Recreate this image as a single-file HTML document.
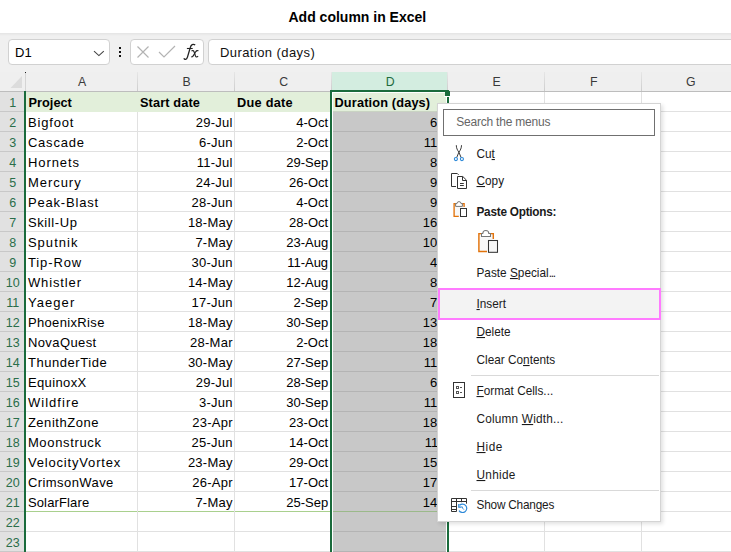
<!DOCTYPE html>
<html><head><meta charset="utf-8"><style>
html,body{margin:0;padding:0;}
body{width:731px;height:552px;overflow:hidden;position:relative;background:#fff;font-family:"Liberation Sans",sans-serif;}
body>div,body>svg{position:absolute;}
.t{white-space:nowrap;}
u{text-decoration-thickness:1px;text-underline-offset:1.3px;}
</style></head><body>
<div class="t" style="left:288.5px;top:9.85px;font-size:14px;line-height:14px;font-weight:bold;color:#000">Add column in Excel</div>
<div style="left:0px;top:33px;width:731px;height:39px;background:#f0f0f0"></div>
<div style="left:0px;top:33px;width:731px;height:3px;background:linear-gradient(#e4e4e4,#f0f0f0)"></div>
<div style="left:8px;top:39px;width:102px;height:26px;background:#fff;border:1px solid #d1d1d1;border-radius:4px;box-sizing:border-box"></div>
<div class="t" style="left:15px;top:45.7px;font-size:13px;line-height:13px;color:#000">D1</div>
<svg style="left:93px;top:49px" width="13" height="9" viewBox="0 0 13 9"><path d="M1 2.2 L5.9 6.6 L10.8 2.2" fill="none" stroke="#444" stroke-width="1.1"/></svg>
<div style="left:119px;top:47px;width:2px;height:2px;background:#111"></div>
<div style="left:119px;top:51px;width:2px;height:2px;background:#111"></div>
<div style="left:119px;top:55px;width:2px;height:2px;background:#111"></div>
<div style="left:130px;top:39px;width:74px;height:26px;background:#fff;border:1px solid #d1d1d1;border-radius:4px;box-sizing:border-box"></div>
<svg style="left:136px;top:45px" width="14" height="14" viewBox="0 0 14 14"><path d="M1.5 1.5 L12.5 12.5 M12.5 1.5 L1.5 12.5" stroke="#b3b3b3" stroke-width="1.2"/></svg>
<svg style="left:158px;top:45px" width="18" height="14" viewBox="0 0 18 14"><path d="M1 7 L6 12 L17 1" fill="none" stroke="#b3b3b3" stroke-width="1.2"/></svg>
<svg style="left:176px;top:38px" width="30" height="28" viewBox="0 0 30 28">
<path d="M7.9 20.2 C8.4 21.9 10.6 22.1 11.5 19 L14.3 9.5 C15 6.6 17 5.6 19.2 6.9" fill="none" stroke="#222" stroke-width="1.25"/>
<path d="M10.9 10.5 H16.7" stroke="#222" stroke-width="1.1"/>
<path d="M15.5 13.2 C16.5 12.1 17.6 12.4 18.1 13.9 L19.5 18 C20 19.3 21.1 19.3 22.1 18.2" fill="none" stroke="#222" stroke-width="1.15"/>
<path d="M22.4 13 C21.6 12.1 20.5 12.5 19.5 14 L17.4 17.6 C16.8 18.9 15.9 19.2 15.2 18.6" fill="none" stroke="#222" stroke-width="1.15"/>
</svg>
<div style="left:208px;top:39px;width:540px;height:26px;background:#fff;border:1px solid #d1d1d1;border-radius:4px;box-sizing:border-box"></div>
<div class="t" style="left:220px;top:45.7px;font-size:13px;line-height:13px;color:#111;letter-spacing:0.42px">Duration (days)</div>
<div style="left:0px;top:72px;width:731px;height:19px;background:#efefef"></div>
<div style="left:0px;top:91px;width:731px;height:1px;background:#bdbdbd"></div>
<svg style="left:0px;top:72px" width="24" height="19" viewBox="0 0 24 19"><path d="M22 4 L22 16 L10.5 16 Z" fill="#dcdcdc"/></svg>
<div style="left:25px;top:72px;width:1px;height:1px;background:#222"></div>
<div style="left:25px;top:73px;width:1px;height:18px;background:#d4d4d4"></div>
<div style="left:332px;top:72px;width:115px;height:18px;background:#d3ede0"></div>
<div class="t" style="left:26.2px;width:112px;top:76.19px;font-size:12.3px;line-height:12.3px;text-align:center;color:#3a3a3a">A</div>
<div style="left:137px;top:72px;width:1px;height:19px;background:linear-gradient(#e6e6e6,#cdcdcd)"></div>
<div class="t" style="left:138.2px;width:97px;top:76.19px;font-size:12.3px;line-height:12.3px;text-align:center;color:#3a3a3a">B</div>
<div style="left:234px;top:72px;width:1px;height:19px;background:linear-gradient(#e6e6e6,#cdcdcd)"></div>
<div class="t" style="left:235.2px;width:97px;top:76.19px;font-size:12.3px;line-height:12.3px;text-align:center;color:#3a3a3a">C</div>
<div style="left:331px;top:72px;width:1px;height:19px;background:linear-gradient(#e6e6e6,#cdcdcd)"></div>
<div class="t" style="left:332.2px;width:116px;top:76.19px;font-size:12.3px;line-height:12.3px;text-align:center;color:#1d6b3e">D</div>
<div style="left:447px;top:72px;width:1px;height:19px;background:linear-gradient(#e6e6e6,#cdcdcd)"></div>
<div class="t" style="left:448.2px;width:97px;top:76.19px;font-size:12.3px;line-height:12.3px;text-align:center;color:#3a3a3a">E</div>
<div style="left:544px;top:72px;width:1px;height:19px;background:linear-gradient(#e6e6e6,#cdcdcd)"></div>
<div class="t" style="left:545.2px;width:97px;top:76.19px;font-size:12.3px;line-height:12.3px;text-align:center;color:#3a3a3a">F</div>
<div style="left:641px;top:72px;width:1px;height:19px;background:linear-gradient(#e6e6e6,#cdcdcd)"></div>
<div class="t" style="left:642.2px;width:97px;top:76.19px;font-size:12.3px;line-height:12.3px;text-align:center;color:#3a3a3a">G</div>
<div style="left:330px;top:90px;width:119px;height:2px;background:#1a6b3c"></div>
<div style="left:0px;top:92px;width:24px;height:19px;background:#e1e1e1"></div>
<div style="left:0px;top:111px;width:24px;height:1px;background:#c8c8c8"></div>
<div class="t" style="left:0.3px;width:25px;text-align:center;top:97.22px;font-size:12.5px;line-height:12.5px;color:#2a6e4a">1</div>
<div style="left:0px;top:112px;width:24px;height:19px;background:#e1e1e1"></div>
<div style="left:0px;top:131px;width:24px;height:1px;background:#c8c8c8"></div>
<div class="t" style="left:0.3px;width:25px;text-align:center;top:117.22px;font-size:12.5px;line-height:12.5px;color:#2a6e4a">2</div>
<div style="left:0px;top:132px;width:24px;height:19px;background:#e1e1e1"></div>
<div style="left:0px;top:151px;width:24px;height:1px;background:#c8c8c8"></div>
<div class="t" style="left:0.3px;width:25px;text-align:center;top:137.22px;font-size:12.5px;line-height:12.5px;color:#2a6e4a">3</div>
<div style="left:0px;top:152px;width:24px;height:19px;background:#e1e1e1"></div>
<div style="left:0px;top:171px;width:24px;height:1px;background:#c8c8c8"></div>
<div class="t" style="left:0.3px;width:25px;text-align:center;top:157.22px;font-size:12.5px;line-height:12.5px;color:#2a6e4a">4</div>
<div style="left:0px;top:172px;width:24px;height:19px;background:#e1e1e1"></div>
<div style="left:0px;top:191px;width:24px;height:1px;background:#c8c8c8"></div>
<div class="t" style="left:0.3px;width:25px;text-align:center;top:177.22px;font-size:12.5px;line-height:12.5px;color:#2a6e4a">5</div>
<div style="left:0px;top:192px;width:24px;height:19px;background:#e1e1e1"></div>
<div style="left:0px;top:211px;width:24px;height:1px;background:#c8c8c8"></div>
<div class="t" style="left:0.3px;width:25px;text-align:center;top:197.22px;font-size:12.5px;line-height:12.5px;color:#2a6e4a">6</div>
<div style="left:0px;top:212px;width:24px;height:19px;background:#e1e1e1"></div>
<div style="left:0px;top:231px;width:24px;height:1px;background:#c8c8c8"></div>
<div class="t" style="left:0.3px;width:25px;text-align:center;top:217.22px;font-size:12.5px;line-height:12.5px;color:#2a6e4a">7</div>
<div style="left:0px;top:232px;width:24px;height:19px;background:#e1e1e1"></div>
<div style="left:0px;top:251px;width:24px;height:1px;background:#c8c8c8"></div>
<div class="t" style="left:0.3px;width:25px;text-align:center;top:237.22px;font-size:12.5px;line-height:12.5px;color:#2a6e4a">8</div>
<div style="left:0px;top:252px;width:24px;height:19px;background:#e1e1e1"></div>
<div style="left:0px;top:271px;width:24px;height:1px;background:#c8c8c8"></div>
<div class="t" style="left:0.3px;width:25px;text-align:center;top:257.22px;font-size:12.5px;line-height:12.5px;color:#2a6e4a">9</div>
<div style="left:0px;top:272px;width:24px;height:19px;background:#e1e1e1"></div>
<div style="left:0px;top:291px;width:24px;height:1px;background:#c8c8c8"></div>
<div class="t" style="left:0.3px;width:25px;text-align:center;top:277.22px;font-size:12.5px;line-height:12.5px;color:#2a6e4a">10</div>
<div style="left:0px;top:292px;width:24px;height:19px;background:#e1e1e1"></div>
<div style="left:0px;top:311px;width:24px;height:1px;background:#c8c8c8"></div>
<div class="t" style="left:0.3px;width:25px;text-align:center;top:297.22px;font-size:12.5px;line-height:12.5px;color:#2a6e4a">11</div>
<div style="left:0px;top:312px;width:24px;height:19px;background:#e1e1e1"></div>
<div style="left:0px;top:331px;width:24px;height:1px;background:#c8c8c8"></div>
<div class="t" style="left:0.3px;width:25px;text-align:center;top:317.22px;font-size:12.5px;line-height:12.5px;color:#2a6e4a">12</div>
<div style="left:0px;top:332px;width:24px;height:19px;background:#e1e1e1"></div>
<div style="left:0px;top:351px;width:24px;height:1px;background:#c8c8c8"></div>
<div class="t" style="left:0.3px;width:25px;text-align:center;top:337.22px;font-size:12.5px;line-height:12.5px;color:#2a6e4a">13</div>
<div style="left:0px;top:352px;width:24px;height:19px;background:#e1e1e1"></div>
<div style="left:0px;top:371px;width:24px;height:1px;background:#c8c8c8"></div>
<div class="t" style="left:0.3px;width:25px;text-align:center;top:357.22px;font-size:12.5px;line-height:12.5px;color:#2a6e4a">14</div>
<div style="left:0px;top:372px;width:24px;height:19px;background:#e1e1e1"></div>
<div style="left:0px;top:391px;width:24px;height:1px;background:#c8c8c8"></div>
<div class="t" style="left:0.3px;width:25px;text-align:center;top:377.22px;font-size:12.5px;line-height:12.5px;color:#2a6e4a">15</div>
<div style="left:0px;top:392px;width:24px;height:19px;background:#e1e1e1"></div>
<div style="left:0px;top:411px;width:24px;height:1px;background:#c8c8c8"></div>
<div class="t" style="left:0.3px;width:25px;text-align:center;top:397.22px;font-size:12.5px;line-height:12.5px;color:#2a6e4a">16</div>
<div style="left:0px;top:412px;width:24px;height:19px;background:#e1e1e1"></div>
<div style="left:0px;top:431px;width:24px;height:1px;background:#c8c8c8"></div>
<div class="t" style="left:0.3px;width:25px;text-align:center;top:417.22px;font-size:12.5px;line-height:12.5px;color:#2a6e4a">17</div>
<div style="left:0px;top:432px;width:24px;height:19px;background:#e1e1e1"></div>
<div style="left:0px;top:451px;width:24px;height:1px;background:#c8c8c8"></div>
<div class="t" style="left:0.3px;width:25px;text-align:center;top:437.22px;font-size:12.5px;line-height:12.5px;color:#2a6e4a">18</div>
<div style="left:0px;top:452px;width:24px;height:19px;background:#e1e1e1"></div>
<div style="left:0px;top:471px;width:24px;height:1px;background:#c8c8c8"></div>
<div class="t" style="left:0.3px;width:25px;text-align:center;top:457.22px;font-size:12.5px;line-height:12.5px;color:#2a6e4a">19</div>
<div style="left:0px;top:472px;width:24px;height:19px;background:#e1e1e1"></div>
<div style="left:0px;top:491px;width:24px;height:1px;background:#c8c8c8"></div>
<div class="t" style="left:0.3px;width:25px;text-align:center;top:477.22px;font-size:12.5px;line-height:12.5px;color:#2a6e4a">20</div>
<div style="left:0px;top:492px;width:24px;height:19px;background:#e1e1e1"></div>
<div style="left:0px;top:511px;width:24px;height:1px;background:#c8c8c8"></div>
<div class="t" style="left:0.3px;width:25px;text-align:center;top:497.22px;font-size:12.5px;line-height:12.5px;color:#2a6e4a">21</div>
<div style="left:0px;top:512px;width:24px;height:19px;background:#e1e1e1"></div>
<div style="left:0px;top:531px;width:24px;height:1px;background:#c8c8c8"></div>
<div class="t" style="left:0.3px;width:25px;text-align:center;top:517.22px;font-size:12.5px;line-height:12.5px;color:#2a6e4a">22</div>
<div style="left:0px;top:532px;width:24px;height:19px;background:#e1e1e1"></div>
<div style="left:0px;top:551px;width:24px;height:1px;background:#c8c8c8"></div>
<div class="t" style="left:0.3px;width:25px;text-align:center;top:537.22px;font-size:12.5px;line-height:12.5px;color:#2a6e4a">23</div>
<div style="left:26px;top:92px;width:305px;height:20px;background:#e2efda"></div>
<div style="left:332px;top:92px;width:115px;height:460px;background:#fff"></div>
<div style="left:333px;top:112px;width:113px;height:440px;background:#c8c8c8"></div>
<div style="left:333px;top:93px;width:113px;height:18px;background:#e2efda"></div>
<div style="left:333px;top:111px;width:113px;height:1px;background:#c9d3c3"></div>
<div style="left:26px;top:131px;width:305px;height:1px;background:#e1e1e1"></div>
<div style="left:333px;top:131px;width:113px;height:1px;background:#b4b4b4"></div>
<div style="left:449px;top:131px;width:282px;height:1px;background:#e1e1e1"></div>
<div style="left:26px;top:151px;width:305px;height:1px;background:#e1e1e1"></div>
<div style="left:333px;top:151px;width:113px;height:1px;background:#b4b4b4"></div>
<div style="left:449px;top:151px;width:282px;height:1px;background:#e1e1e1"></div>
<div style="left:26px;top:171px;width:305px;height:1px;background:#e1e1e1"></div>
<div style="left:333px;top:171px;width:113px;height:1px;background:#b4b4b4"></div>
<div style="left:449px;top:171px;width:282px;height:1px;background:#e1e1e1"></div>
<div style="left:26px;top:191px;width:305px;height:1px;background:#e1e1e1"></div>
<div style="left:333px;top:191px;width:113px;height:1px;background:#b4b4b4"></div>
<div style="left:449px;top:191px;width:282px;height:1px;background:#e1e1e1"></div>
<div style="left:26px;top:211px;width:305px;height:1px;background:#e1e1e1"></div>
<div style="left:333px;top:211px;width:113px;height:1px;background:#b4b4b4"></div>
<div style="left:449px;top:211px;width:282px;height:1px;background:#e1e1e1"></div>
<div style="left:26px;top:231px;width:305px;height:1px;background:#e1e1e1"></div>
<div style="left:333px;top:231px;width:113px;height:1px;background:#b4b4b4"></div>
<div style="left:449px;top:231px;width:282px;height:1px;background:#e1e1e1"></div>
<div style="left:26px;top:251px;width:305px;height:1px;background:#e1e1e1"></div>
<div style="left:333px;top:251px;width:113px;height:1px;background:#b4b4b4"></div>
<div style="left:449px;top:251px;width:282px;height:1px;background:#e1e1e1"></div>
<div style="left:26px;top:271px;width:305px;height:1px;background:#e1e1e1"></div>
<div style="left:333px;top:271px;width:113px;height:1px;background:#b4b4b4"></div>
<div style="left:449px;top:271px;width:282px;height:1px;background:#e1e1e1"></div>
<div style="left:26px;top:291px;width:305px;height:1px;background:#e1e1e1"></div>
<div style="left:333px;top:291px;width:113px;height:1px;background:#b4b4b4"></div>
<div style="left:449px;top:291px;width:282px;height:1px;background:#e1e1e1"></div>
<div style="left:26px;top:311px;width:305px;height:1px;background:#e1e1e1"></div>
<div style="left:333px;top:311px;width:113px;height:1px;background:#b4b4b4"></div>
<div style="left:449px;top:311px;width:282px;height:1px;background:#e1e1e1"></div>
<div style="left:26px;top:331px;width:305px;height:1px;background:#e1e1e1"></div>
<div style="left:333px;top:331px;width:113px;height:1px;background:#b4b4b4"></div>
<div style="left:449px;top:331px;width:282px;height:1px;background:#e1e1e1"></div>
<div style="left:26px;top:351px;width:305px;height:1px;background:#e1e1e1"></div>
<div style="left:333px;top:351px;width:113px;height:1px;background:#b4b4b4"></div>
<div style="left:449px;top:351px;width:282px;height:1px;background:#e1e1e1"></div>
<div style="left:26px;top:371px;width:305px;height:1px;background:#e1e1e1"></div>
<div style="left:333px;top:371px;width:113px;height:1px;background:#b4b4b4"></div>
<div style="left:449px;top:371px;width:282px;height:1px;background:#e1e1e1"></div>
<div style="left:26px;top:391px;width:305px;height:1px;background:#e1e1e1"></div>
<div style="left:333px;top:391px;width:113px;height:1px;background:#b4b4b4"></div>
<div style="left:449px;top:391px;width:282px;height:1px;background:#e1e1e1"></div>
<div style="left:26px;top:411px;width:305px;height:1px;background:#e1e1e1"></div>
<div style="left:333px;top:411px;width:113px;height:1px;background:#b4b4b4"></div>
<div style="left:449px;top:411px;width:282px;height:1px;background:#e1e1e1"></div>
<div style="left:26px;top:431px;width:305px;height:1px;background:#e1e1e1"></div>
<div style="left:333px;top:431px;width:113px;height:1px;background:#b4b4b4"></div>
<div style="left:449px;top:431px;width:282px;height:1px;background:#e1e1e1"></div>
<div style="left:26px;top:451px;width:305px;height:1px;background:#e1e1e1"></div>
<div style="left:333px;top:451px;width:113px;height:1px;background:#b4b4b4"></div>
<div style="left:449px;top:451px;width:282px;height:1px;background:#e1e1e1"></div>
<div style="left:26px;top:471px;width:305px;height:1px;background:#e1e1e1"></div>
<div style="left:333px;top:471px;width:113px;height:1px;background:#b4b4b4"></div>
<div style="left:449px;top:471px;width:282px;height:1px;background:#e1e1e1"></div>
<div style="left:26px;top:491px;width:305px;height:1px;background:#e1e1e1"></div>
<div style="left:333px;top:491px;width:113px;height:1px;background:#b4b4b4"></div>
<div style="left:449px;top:491px;width:282px;height:1px;background:#e1e1e1"></div>
<div style="left:26px;top:511px;width:305px;height:1px;background:#e1e1e1"></div>
<div style="left:333px;top:511px;width:113px;height:1px;background:#b4b4b4"></div>
<div style="left:449px;top:511px;width:282px;height:1px;background:#e1e1e1"></div>
<div style="left:26px;top:531px;width:305px;height:1px;background:#e1e1e1"></div>
<div style="left:333px;top:531px;width:113px;height:1px;background:#b4b4b4"></div>
<div style="left:449px;top:531px;width:282px;height:1px;background:#e1e1e1"></div>
<div style="left:26px;top:551px;width:305px;height:1px;background:#e1e1e1"></div>
<div style="left:333px;top:551px;width:113px;height:1px;background:#b4b4b4"></div>
<div style="left:449px;top:551px;width:282px;height:1px;background:#e1e1e1"></div>
<div style="left:449px;top:111px;width:282px;height:1px;background:#e1e1e1"></div>
<div style="left:26px;top:511px;width:305px;height:1px;background:#a9d08e"></div>
<div style="left:333px;top:511px;width:113px;height:1px;background:#9bb98a"></div>
<div style="left:137px;top:112px;width:1px;height:440px;background:#e1e1e1"></div>
<div style="left:234px;top:112px;width:1px;height:440px;background:#e1e1e1"></div>
<div style="left:641px;top:112px;width:1px;height:440px;background:#e1e1e1"></div>
<div style="left:544px;top:112px;width:1px;height:440px;background:#e1e1e1"></div>
<div style="left:641px;top:92px;width:1px;height:20px;background:#e1e1e1"></div>
<div style="left:544px;top:92px;width:1px;height:20px;background:#e1e1e1"></div>
<div style="left:24px;top:91px;width:2px;height:461px;background:#1a6b3c"></div>
<div style="left:330px;top:90px;width:2px;height:462px;background:#1a6b3c"></div>
<div style="left:447px;top:97px;width:2px;height:455px;background:#1a6b3c"></div>
<div style="left:446px;top:91px;width:1px;height:6px;background:#fff"></div>
<div style="left:444px;top:96px;width:6px;height:1px;background:#fff"></div>
<div style="left:445px;top:91px;width:5px;height:5px;background:#1a6b3c"></div>
<div class="t" style="left:28.6px;top:97.01px;font-size:12.75px;line-height:12.75px;font-weight:bold;color:#000">Project</div>
<div class="t" style="left:140px;top:97.01px;font-size:12.75px;line-height:12.75px;font-weight:bold;color:#000;letter-spacing:0.12px">Start date</div>
<div class="t" style="left:237px;top:97.01px;font-size:12.75px;line-height:12.75px;font-weight:bold;color:#000;letter-spacing:0.25px">Due date</div>
<div class="t" style="left:334.5px;top:97.01px;font-size:12.75px;line-height:12.75px;font-weight:bold;color:#000;letter-spacing:0.15px">Duration (days)</div>
<div class="t" style="left:27.9px;top:116.0px;font-size:13px;line-height:13px;color:#000;letter-spacing:0.85px">Bigfoot</div>
<div class="t" style="right:498.25px;top:116.0px;font-size:13px;line-height:13px;color:#000;letter-spacing:0.25px">29-Jul</div>
<div class="t" style="right:402.9px;top:116.0px;font-size:13px;line-height:13px;color:#000">4-Oct</div>
<div class="t" style="right:286.5px;top:116.0px;font-size:13px;line-height:13px;color:#000">67</div>
<div class="t" style="left:27.9px;top:136.0px;font-size:13px;line-height:13px;color:#000;letter-spacing:0.79px">Cascade</div>
<div class="t" style="right:498.25px;top:136.0px;font-size:13px;line-height:13px;color:#000;letter-spacing:0.25px">6-Jun</div>
<div class="t" style="right:402.9px;top:136.0px;font-size:13px;line-height:13px;color:#000">2-Oct</div>
<div class="t" style="right:286.5px;top:136.0px;font-size:13px;line-height:13px;color:#000">118</div>
<div class="t" style="left:27.9px;top:156.0px;font-size:13px;line-height:13px;color:#000;letter-spacing:0.94px">Hornets</div>
<div class="t" style="right:498.25px;top:156.0px;font-size:13px;line-height:13px;color:#000;letter-spacing:0.25px">11-Jul</div>
<div class="t" style="right:402.9px;top:156.0px;font-size:13px;line-height:13px;color:#000">29-Sep</div>
<div class="t" style="right:286.5px;top:156.0px;font-size:13px;line-height:13px;color:#000">80</div>
<div class="t" style="left:27.9px;top:176.0px;font-size:13px;line-height:13px;color:#000;letter-spacing:0.97px">Mercury</div>
<div class="t" style="right:498.25px;top:176.0px;font-size:13px;line-height:13px;color:#000;letter-spacing:0.25px">24-Jul</div>
<div class="t" style="right:402.9px;top:176.0px;font-size:13px;line-height:13px;color:#000">26-Oct</div>
<div class="t" style="right:286.5px;top:176.0px;font-size:13px;line-height:13px;color:#000">94</div>
<div class="t" style="left:27.9px;top:196.0px;font-size:13px;line-height:13px;color:#000;letter-spacing:0.82px">Peak-Blast</div>
<div class="t" style="right:498.25px;top:196.0px;font-size:13px;line-height:13px;color:#000;letter-spacing:0.25px">28-Jun</div>
<div class="t" style="right:402.9px;top:196.0px;font-size:13px;line-height:13px;color:#000">4-Oct</div>
<div class="t" style="right:286.5px;top:196.0px;font-size:13px;line-height:13px;color:#000">98</div>
<div class="t" style="left:27.9px;top:216.0px;font-size:13px;line-height:13px;color:#000;letter-spacing:0.61px">Skill-Up</div>
<div class="t" style="right:498.25px;top:216.0px;font-size:13px;line-height:13px;color:#000;letter-spacing:0.25px">18-May</div>
<div class="t" style="right:402.9px;top:216.0px;font-size:13px;line-height:13px;color:#000">28-Oct</div>
<div class="t" style="right:286.5px;top:216.0px;font-size:13px;line-height:13px;color:#000">163</div>
<div class="t" style="left:27.9px;top:236.0px;font-size:13px;line-height:13px;color:#000;letter-spacing:1.04px">Sputnik</div>
<div class="t" style="right:498.25px;top:236.0px;font-size:13px;line-height:13px;color:#000;letter-spacing:0.25px">7-May</div>
<div class="t" style="right:402.9px;top:236.0px;font-size:13px;line-height:13px;color:#000">23-Aug</div>
<div class="t" style="right:286.5px;top:236.0px;font-size:13px;line-height:13px;color:#000">108</div>
<div class="t" style="left:27.9px;top:256.0px;font-size:13px;line-height:13px;color:#000;letter-spacing:0.9px">Tip-Row</div>
<div class="t" style="right:498.25px;top:256.0px;font-size:13px;line-height:13px;color:#000;letter-spacing:0.25px">30-Jun</div>
<div class="t" style="right:402.9px;top:256.0px;font-size:13px;line-height:13px;color:#000">11-Aug</div>
<div class="t" style="right:286.5px;top:256.0px;font-size:13px;line-height:13px;color:#000">42</div>
<div class="t" style="left:27.9px;top:276.0px;font-size:13px;line-height:13px;color:#000;letter-spacing:0.88px">Whistler</div>
<div class="t" style="right:498.25px;top:276.0px;font-size:13px;line-height:13px;color:#000;letter-spacing:0.25px">14-May</div>
<div class="t" style="right:402.9px;top:276.0px;font-size:13px;line-height:13px;color:#000">12-Aug</div>
<div class="t" style="right:286.5px;top:276.0px;font-size:13px;line-height:13px;color:#000">89</div>
<div class="t" style="left:27.9px;top:296.0px;font-size:13px;line-height:13px;color:#000;letter-spacing:1.08px">Yaeger</div>
<div class="t" style="right:498.25px;top:296.0px;font-size:13px;line-height:13px;color:#000;letter-spacing:0.25px">17-Jun</div>
<div class="t" style="right:402.9px;top:296.0px;font-size:13px;line-height:13px;color:#000">2-Sep</div>
<div class="t" style="right:286.5px;top:296.0px;font-size:13px;line-height:13px;color:#000">77</div>
<div class="t" style="left:27.9px;top:316.0px;font-size:13px;line-height:13px;color:#000;letter-spacing:0.35px">PhoenixRise</div>
<div class="t" style="right:498.25px;top:316.0px;font-size:13px;line-height:13px;color:#000;letter-spacing:0.25px">18-May</div>
<div class="t" style="right:402.9px;top:316.0px;font-size:13px;line-height:13px;color:#000">30-Sep</div>
<div class="t" style="right:286.5px;top:316.0px;font-size:13px;line-height:13px;color:#000">135</div>
<div class="t" style="left:27.9px;top:336.0px;font-size:13px;line-height:13px;color:#000;letter-spacing:0.41px">NovaQuest</div>
<div class="t" style="right:498.25px;top:336.0px;font-size:13px;line-height:13px;color:#000;letter-spacing:0.25px">28-Mar</div>
<div class="t" style="right:402.9px;top:336.0px;font-size:13px;line-height:13px;color:#000">2-Oct</div>
<div class="t" style="right:286.5px;top:336.0px;font-size:13px;line-height:13px;color:#000">188</div>
<div class="t" style="left:27.9px;top:356.0px;font-size:13px;line-height:13px;color:#000;letter-spacing:0.56px">ThunderTide</div>
<div class="t" style="right:498.25px;top:356.0px;font-size:13px;line-height:13px;color:#000;letter-spacing:0.25px">30-May</div>
<div class="t" style="right:402.9px;top:356.0px;font-size:13px;line-height:13px;color:#000">27-Sep</div>
<div class="t" style="right:286.5px;top:356.0px;font-size:13px;line-height:13px;color:#000">119</div>
<div class="t" style="left:27.9px;top:376.0px;font-size:13px;line-height:13px;color:#000;letter-spacing:0.38px">EquinoxX</div>
<div class="t" style="right:498.25px;top:376.0px;font-size:13px;line-height:13px;color:#000;letter-spacing:0.25px">29-Jul</div>
<div class="t" style="right:402.9px;top:376.0px;font-size:13px;line-height:13px;color:#000">28-Sep</div>
<div class="t" style="right:286.5px;top:376.0px;font-size:13px;line-height:13px;color:#000">61</div>
<div class="t" style="left:27.9px;top:396.0px;font-size:13px;line-height:13px;color:#000;letter-spacing:1.05px">Wildfire</div>
<div class="t" style="right:498.25px;top:396.0px;font-size:13px;line-height:13px;color:#000;letter-spacing:0.25px">3-Jun</div>
<div class="t" style="right:402.9px;top:396.0px;font-size:13px;line-height:13px;color:#000">30-Sep</div>
<div class="t" style="right:286.5px;top:396.0px;font-size:13px;line-height:13px;color:#000">119</div>
<div class="t" style="left:27.9px;top:416.0px;font-size:13px;line-height:13px;color:#000;letter-spacing:0.53px">ZenithZone</div>
<div class="t" style="right:498.25px;top:416.0px;font-size:13px;line-height:13px;color:#000;letter-spacing:0.25px">23-Apr</div>
<div class="t" style="right:402.9px;top:416.0px;font-size:13px;line-height:13px;color:#000">23-Oct</div>
<div class="t" style="right:286.5px;top:416.0px;font-size:13px;line-height:13px;color:#000">183</div>
<div class="t" style="left:27.9px;top:436.0px;font-size:13px;line-height:13px;color:#000;letter-spacing:0.65px">Moonstruck</div>
<div class="t" style="right:498.25px;top:436.0px;font-size:13px;line-height:13px;color:#000;letter-spacing:0.25px">25-Jun</div>
<div class="t" style="right:402.9px;top:436.0px;font-size:13px;line-height:13px;color:#000">14-Oct</div>
<div class="t" style="right:286.5px;top:436.0px;font-size:13px;line-height:13px;color:#000">111</div>
<div class="t" style="left:27.9px;top:456.0px;font-size:13px;line-height:13px;color:#000;letter-spacing:0.83px">VelocityVortex</div>
<div class="t" style="right:498.25px;top:456.0px;font-size:13px;line-height:13px;color:#000;letter-spacing:0.25px">23-May</div>
<div class="t" style="right:402.9px;top:456.0px;font-size:13px;line-height:13px;color:#000">29-Oct</div>
<div class="t" style="right:286.5px;top:456.0px;font-size:13px;line-height:13px;color:#000">159</div>
<div class="t" style="left:27.9px;top:476.0px;font-size:13px;line-height:13px;color:#000;letter-spacing:0.43px">CrimsonWave</div>
<div class="t" style="right:498.25px;top:476.0px;font-size:13px;line-height:13px;color:#000;letter-spacing:0.25px">26-Apr</div>
<div class="t" style="right:402.9px;top:476.0px;font-size:13px;line-height:13px;color:#000">17-Oct</div>
<div class="t" style="right:286.5px;top:476.0px;font-size:13px;line-height:13px;color:#000">174</div>
<div class="t" style="left:27.9px;top:496.0px;font-size:13px;line-height:13px;color:#000;letter-spacing:0.15px">SolarFlare</div>
<div class="t" style="right:498.25px;top:496.0px;font-size:13px;line-height:13px;color:#000;letter-spacing:0.25px">7-May</div>
<div class="t" style="right:402.9px;top:496.0px;font-size:13px;line-height:13px;color:#000">25-Sep</div>
<div class="t" style="right:286.5px;top:496.0px;font-size:13px;line-height:13px;color:#000">141</div>
<div style="left:437px;top:103px;width:224px;height:419px;background:#fff;border:1px solid #d4d4d4;box-sizing:border-box;box-shadow:2px 2px 4px rgba(0,0,0,0.12)"></div>
<div style="left:443px;top:109px;width:212px;height:27px;border:1px solid #707070;box-sizing:border-box;background:#fff"></div>
<div class="t" style="left:456.3px;top:116.24px;font-size:12px;line-height:12px;color:#666;letter-spacing:-0.22px;transform:scaleY(1.06);transform-origin:0 10.16px">Search the menus</div>
<div style="left:438px;top:288px;width:223px;height:32px;background:#f3f3f3;border:2px solid #ff7bff;box-sizing:border-box"></div>
<div class="t" style="left:476.5px;top:148.51px;font-size:11.8px;line-height:11.8px;color:#1a1a1a;transform:scaleY(1.08);transform-origin:0 9.99px">Cu<u>t</u></div>
<div class="t" style="left:476.5px;top:176.41px;font-size:11.8px;line-height:11.8px;color:#1a1a1a;transform:scaleY(1.08);transform-origin:0 9.99px"><u>C</u>opy</div>
<div class="t" style="left:476.5px;top:206.51px;font-size:11.8px;line-height:11.8px;color:#1a1a1a;font-weight:bold;letter-spacing:-0.25px;transform:scaleY(1.08);transform-origin:0 9.99px">Paste Options:</div>
<div class="t" style="left:476.5px;top:267.61px;font-size:11.8px;line-height:11.8px;color:#1a1a1a;transform:scaleY(1.08);transform-origin:0 9.99px">Paste <u>S</u>pecial<span style="letter-spacing:-1.2px">...</span></div>
<div class="t" style="left:476.5px;top:299.01px;font-size:11.8px;line-height:11.8px;color:#1a1a1a;transform:scaleY(1.08);transform-origin:0 9.99px"><u>I</u>nsert</div>
<div class="t" style="left:476.5px;top:326.81px;font-size:11.8px;line-height:11.8px;color:#1a1a1a;transform:scaleY(1.08);transform-origin:0 9.99px"><u>D</u>elete</div>
<div class="t" style="left:476.5px;top:354.91px;font-size:11.8px;line-height:11.8px;color:#1a1a1a;transform:scaleY(1.08);transform-origin:0 9.99px">Clear Co<u>n</u>tents</div>
<div class="t" style="left:476.5px;top:386.11px;font-size:11.8px;line-height:11.8px;color:#1a1a1a;transform:scaleY(1.08);transform-origin:0 9.99px"><u>F</u>ormat Cells...</div>
<div class="t" style="left:476.5px;top:414.11px;font-size:11.8px;line-height:11.8px;color:#1a1a1a;letter-spacing:0.2px;transform:scaleY(1.08);transform-origin:0 9.99px">Column <u>W</u>idth...</div>
<div class="t" style="left:476.5px;top:441.81px;font-size:11.8px;line-height:11.8px;color:#1a1a1a;letter-spacing:0.5px;transform:scaleY(1.08);transform-origin:0 9.99px"><u>H</u>ide</div>
<div class="t" style="left:476.5px;top:469.51px;font-size:11.8px;line-height:11.8px;color:#1a1a1a;letter-spacing:0.3px;transform:scaleY(1.08);transform-origin:0 9.99px"><u>U</u>nhide</div>
<div class="t" style="left:476.5px;top:500.41px;font-size:11.8px;line-height:11.8px;color:#1a1a1a;letter-spacing:-0.2px;transform:scaleY(1.08);transform-origin:0 9.99px">Show Chan<u>g</u>es</div>
<div style="left:471px;top:375px;width:188px;height:1px;background:#d9d9d9"></div>
<div style="left:471px;top:490px;width:188px;height:1px;background:#d9d9d9"></div>
<svg style="left:437px;top:103px" width="224" height="418" viewBox="437 103 224 418">
<g fill="none">
<path d="M456.3 145.2 C456.3 148 457.4 150.3 458.9 152.2 L461.1 157.5" stroke="#3a3a3a" stroke-width="1"/>
<path d="M461.5 145.2 C461.5 148 460.4 150.3 458.9 152.2 L456.7 157.5" stroke="#3a3a3a" stroke-width="1"/>
<circle cx="455.9" cy="159.1" r="1.55" stroke="#2b88d8" stroke-width="1.1"/>
<circle cx="461.9" cy="159.1" r="1.55" stroke="#2b88d8" stroke-width="1.1"/>
<path d="M456 186.5 H451.5 V173.5 H457.3 L458.6 174.8" stroke="#333" stroke-width="1"/>
<path d="M457.5 176.5 H462.8 L466.5 180.2 V188.5 H457.5 Z" stroke="#333" stroke-width="1" fill="#fff"/>
<path d="M462.5 176.8 V180.5 H466.3" stroke="#333" stroke-width="1"/>
<path d="M460 183.5 H463.8 M460 185.5 H463.8" stroke="#333" stroke-width="1"/>
<rect x="454" y="204" width="10" height="12.3" fill="#f8f8f8"/>
<path d="M456 203.6 H454.1 V216.3 H458.8" stroke="#e2730b" stroke-width="1.35"/>
<path d="M461.8 203.6 H464.1 V206.9" stroke="#e2730b" stroke-width="1.35"/>
<path d="M455.6 206.4 V203.6 H457 A2 2 0 0 1 461 203.6 H462.4 V206.4 Z" stroke="#777" stroke-width="1" fill="#fff"/>
<rect x="460.5" y="208.5" width="6" height="8" stroke="#333" stroke-width="1" fill="#fff"/>
<rect x="479" y="234" width="14.2" height="17.5" fill="#f8f8f8"/>
<path d="M481.6 233.6 H478.9 V251.5 H487" stroke="#e2730b" stroke-width="1.45"/>
<path d="M490.6 233.6 H493.3 V239" stroke="#e2730b" stroke-width="1.45"/>
<path d="M481.5 236.5 V233.5 H482.8 A3 3 0 0 1 488.8 233.5 H490.5 V236.5 Z" stroke="#777" stroke-width="1.05" fill="#fff"/>
<rect x="488.5" y="240.5" width="9" height="11.8" stroke="#333" stroke-width="1.05" fill="#f7f7f7"/>
<rect x="453.5" y="382.5" width="11" height="15" stroke="#333" stroke-width="1"/>
<rect x="456.5" y="386.5" width="2" height="2" stroke="#555" stroke-width="1"/>
<rect x="456.5" y="391.5" width="2" height="2" stroke="#555" stroke-width="1"/>
<path d="M460 387.5 H462 M460 392.5 H462" stroke="#555" stroke-width="1"/>
<path d="M451.5 511.5 V498.5 H466.5 V503.7 M451.5 501.5 H466.5 M456.5 498.5 V511.5 M461.5 498.5 V502.2 M451.5 506.5 H456.5 M451.5 509.5 H456.5 M451.5 511.5 H456.5" stroke="#333" stroke-width="1"/>
<rect x="453.5" y="503" width="1" height="1" fill="#eee"/>
<path d="M459.6 505.3 A4.2 4.2 0 1 1 459 510.6" stroke="#2b88d8" stroke-width="1.2"/>
<path d="M458.8 504 V507.2 H461.6" stroke="#2b88d8" stroke-width="1.2"/>
<path d="M461.9 506.4 L462.7 508.3 L463.9 509.6" stroke="#2b88d8" stroke-width="1"/>
</g></svg>
</body></html>
